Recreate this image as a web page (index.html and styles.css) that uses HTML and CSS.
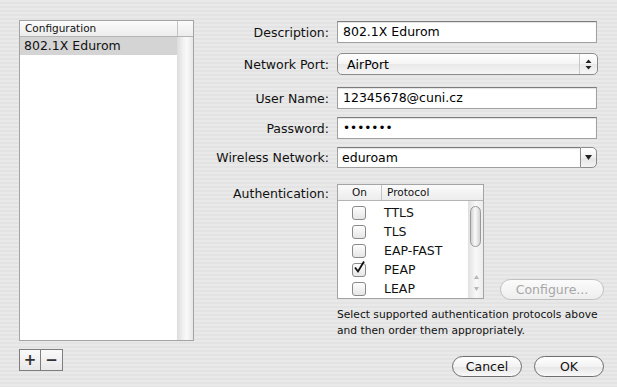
FILE: index.html
```html
<!DOCTYPE html>
<html lang="en">
<head>
    <meta charset="UTF-8">
    <title>802.1X Configuration</title>
    <link rel="stylesheet" href="styles.css">
</head>
<body>
    <div class="window">
        <!-- Configuration list -->
        <div class="sidebar">
            <div class="list">
                <div class="list-header">
                    <div class="list-title">Configuration</div>
                    <div class="list-corner"></div>
                </div>
                <div class="list-body">
                    <div class="list-rows">
                        <div class="list-row selected">802.1X Edurom</div>
                    </div>
                    <div class="list-scroll"></div>
                </div>
            </div>
            <div class="add-remove">
                <div class="square-btn">+</div>
                <div class="square-btn">&minus;</div>
            </div>
        </div>

        <!-- Settings form -->
        <div class="form">
            <div class="row row-desc">
                <label>Description:</label>
                <div class="field">802.1X Edurom</div>
            </div>
            <div class="row row-port">
                <label>Network Port:</label>
                <div class="popup">
                    <span class="popup-text">AirPort</span>
                    <span class="popup-arrows">
                        <svg width="7" height="11" viewBox="0 0 7 11"><path d="M3.5 0.5 L6.5 4 L0.5 4 Z M0.5 7 L6.5 7 L3.5 10.5 Z" fill="#222"/></svg>
                    </span>
                </div>
            </div>
            <div class="row row-user">
                <label>User Name:</label>
                <div class="field">12345678@cuni.cz</div>
            </div>
            <div class="row row-pass">
                <label>Password:</label>
                <div class="field password">&bull;&bull;&bull;&bull;&bull;&bull;&bull;</div>
            </div>
            <div class="row row-wifi">
                <label>Wireless Network:</label>
                <div class="combo">
                    <div class="combo-text">eduroam</div>
                    <div class="combo-btn">
                        <svg width="7" height="5" viewBox="0 0 7 5"><path d="M0 0 L7 0 L3.5 5 Z" fill="#222"/></svg>
                    </div>
                </div>
            </div>
            <div class="row row-auth">
                <label>Authentication:</label>
                <div class="auth">
                    <div class="auth-top">
                        <div class="table">
                            <div class="table-header">
                                <div class="col-on">On</div>
                                <div class="col-proto">Protocol</div>
                            </div>
                            <div class="table-body">
                                <div class="table-rows">
                                    <div class="t-row"><span class="check"></span><span class="proto">TTLS</span></div>
                                    <div class="t-row"><span class="check"></span><span class="proto">TLS</span></div>
                                    <div class="t-row"><span class="check"></span><span class="proto">EAP-FAST</span></div>
                                    <div class="t-row"><span class="check checked">
                                        <svg width="14" height="14" viewBox="0 0 14 14"><path d="M3 6.5 L6 10.5 L12 0.5" stroke="#111" stroke-width="1.8" fill="none"/></svg>
                                    </span><span class="proto">PEAP</span></div>
                                    <div class="t-row"><span class="check"></span><span class="proto">LEAP</span></div>
                                    <div class="t-row"><span class="check"></span><span class="proto"></span></div>
                                </div>
                                <div class="t-scroll">
                                    <div class="thumb"></div>
                                    <div class="arrows">
                                        <svg width="7" height="20" viewBox="0 0 7 20"><path d="M3.5 2 L6 6 L1 6 Z M1 14 L6 14 L3.5 18 Z" fill="#b8b8b8"/></svg>
                                    </div>
                                </div>
                            </div>
                        </div>
                        <div class="configure">Configure...</div>
                    </div>
                    <p class="help">Select supported authentication protocols above and then order them appropriately.</p>
                </div>
            </div>
            <div class="actions">
                <div class="pill">Cancel</div>
                <div class="pill">OK</div>
            </div>
        </div>
    </div>
</body>
</html>
```

FILE: styles.css
```css
* {
    margin: 0;
    padding: 0;
    box-sizing: border-box;
}

body {
    width: 617px;
    height: 387px;
    overflow: hidden;
    font-family: "DejaVu Sans", "Liberation Sans", sans-serif;
    font-size: 12.5px;
    color: #000;
    background: repeating-linear-gradient(180deg, #e9e9e9 0px, #e9e9e9 2px, #e3e3e3 2px, #e3e3e3 4px);
}

.window {
    display: flex;
    padding: 20px 13px 0 19px;
}

/* ---------- left list ---------- */

.sidebar {
    width: 175px;
}

.list {
    height: 321px;
    border: 1px solid #a4a4a4;
    background: #fff;
    display: flex;
    flex-direction: column;
}

.list-header {
    display: flex;
    height: 16px;
    border-bottom: 1px solid #b4b4b4;
    background: linear-gradient(180deg, #fbfbfb, #ececec);
}

.list-title {
    flex: 1;
    font-size: 10.5px;
    line-height: 15px;
    padding-left: 5px;
    color: #111;
}

.list-corner {
    width: 16px;
    border-left: 1px solid #c4c4c4;
}

.list-body {
    flex: 1;
    display: flex;
}

.list-rows {
    flex: 1;
}

.list-row {
    height: 18px;
    line-height: 18px;
    padding-left: 4px;
    font-size: 12.5px;
    color: #111;
}

.list-row.selected {
    background: #d4d4d4;
}

.list-scroll {
    width: 16px;
    background: linear-gradient(90deg, #dcdcdc, #f2f2f2 40%, #fafafa 60%, #e6e6e6);
}

.add-remove {
    display: flex;
    margin-top: 8px;
}

.square-btn {
    width: 22px;
    height: 22px;
    border: 1px solid #7e7e7e;
    background: linear-gradient(180deg, #fafafa, #e8e8e8);
    text-align: center;
    font-size: 15px;
    line-height: 20px;
    font-weight: bold;
    color: #333;
}

.square-btn + .square-btn {
    border-left: none;
}

/* ---------- form ---------- */

.form {
    margin-left: 6px;
    flex: 1;
}

.row {
    display: flex;
    align-items: center;
}

.row label {
    width: 137px;
    text-align: right;
    padding-right: 8px;
    font-size: 12.5px;
    color: #111;
    flex-shrink: 0;
}

.row-desc { margin-top: 1px; }
.row-port { margin-top: 10px; }
.row-user { margin-top: 12px; }
.row-pass { margin-top: 8px; }
.row-wifi { margin-top: 8px; }
.row-auth { margin-top: 16px; align-items: flex-start; }

.field {
    width: 260px;
    height: 22px;
    border: 1px solid #a0a0a0;
    border-top-color: #7c7c7c;
    background: #fff;
    box-shadow: inset 0 1px 1px rgba(0, 0, 0, 0.12);
    padding-left: 5px;
    font-size: 12.5px;
    line-height: 20px;
}

.field.password {
    font-size: 12px;
}

.popup {
    width: 261px;
    height: 22px;
    border: 1px solid #8c8c8c;
    border-radius: 5px;
    background: linear-gradient(180deg, #ffffff, #f4f4f4 50%, #e8e8e8 51%, #f6f6f6);
    display: flex;
    align-items: center;
}

.popup-text {
    flex: 1;
    padding-left: 9px;
    font-size: 12.5px;
}

.popup-arrows {
    width: 18px;
    height: 100%;
    border-left: 1px solid #c8c8c8;
    display: flex;
    align-items: center;
    justify-content: center;
}

.combo {
    width: 260px;
    height: 21px;
    display: flex;
}

.combo-text {
    flex: 1;
    border: 1px solid #a0a0a0;
    border-top-color: #7c7c7c;
    border-right: none;
    background: #fff;
    box-shadow: inset 0 1px 1px rgba(0, 0, 0, 0.12);
    padding-left: 4px;
    font-size: 12.5px;
    line-height: 19px;
}

.combo-btn {
    width: 17px;
    border: 1px solid #8c8c8c;
    border-radius: 0 5px 5px 0;
    background: linear-gradient(180deg, #ffffff, #f0f0f0 50%, #e4e4e4 51%, #f4f4f4);
    display: flex;
    align-items: center;
    justify-content: center;
}

/* ---------- authentication table ---------- */

.row-auth label {
    padding-top: 2px;
}

.auth {
    width: 267px;
}

.auth-top {
    display: flex;
    align-items: flex-end;
}

.table {
    width: 147px;
    height: 115px;
    border: 1px solid #a4a4a4;
    background: #fff;
    display: flex;
    flex-direction: column;
    overflow: hidden;
}

.table-header {
    display: flex;
    height: 16px;
    border-bottom: 1px solid #b4b4b4;
    background: linear-gradient(180deg, #fbfbfb, #ececec);
    font-size: 10.5px;
    line-height: 15px;
    color: #111;
}

.col-on {
    width: 43px;
    text-align: center;
}

.col-proto {
    flex: 1;
    border-left: 1px solid #c4c4c4;
    padding-left: 5px;
}

.table-body {
    flex: 1;
    display: flex;
    overflow: hidden;
}

.table-rows {
    flex: 1;
    padding-top: 2px;
}

.t-row {
    display: flex;
    align-items: center;
    height: 19px;
}

.check {
    width: 14px;
    height: 14px;
    margin-left: 14px;
    border: 1px solid #8a8a8a;
    border-radius: 3px;
    background: linear-gradient(180deg, #fdfdfd, #e6e6e6);
    position: relative;
}

.check svg {
    position: absolute;
    left: -1px;
    top: -3px;
}

.proto {
    margin-left: 18px;
    font-size: 12.5px;
    color: #111;
}

.t-scroll {
    width: 15px;
    border-left: 1px solid #e0e0e0;
    background: linear-gradient(90deg, #e4e4e4, #f8f8f8 50%, #ececec);
    display: flex;
    flex-direction: column;
    justify-content: space-between;
    padding-top: 5px;
}

.thumb {
    width: 11px;
    height: 41px;
    margin-left: 1px;
    border: 1px solid #9a9a9a;
    border-radius: 6px;
    background: linear-gradient(90deg, #cfcfcf, #fafafa 45%, #f0f0f0 60%, #d2d2d2);
}

.arrows {
    height: 30px;
    display: flex;
    align-items: center;
    justify-content: center;
}

.configure {
    margin-left: 16px;
    margin-bottom: -1px;
    width: 104px;
    height: 21px;
    border: 1px solid #c0c0c0;
    border-radius: 11px;
    background: linear-gradient(180deg, #fbfbfb, #eeeeee);
    text-align: center;
    font-size: 12.5px;
    line-height: 19px;
    color: #a6a6a6;
}

.help {
    margin-top: 8px;
    font-size: 10.7px;
    line-height: 16px;
    color: #111;
}

.actions {
    display: flex;
    justify-content: flex-end;
    gap: 12px;
    margin-top: 17px;
}

.pill {
    width: 70px;
    height: 21px;
    border: 1px solid #6e6e6e;
    border-radius: 11px;
    background: linear-gradient(180deg, #ffffff, #f2f2f2 50%, #e6e6e6 51%, #f8f8f8);
    text-align: center;
    font-size: 12.5px;
    line-height: 19px;
    color: #111;
}
```
